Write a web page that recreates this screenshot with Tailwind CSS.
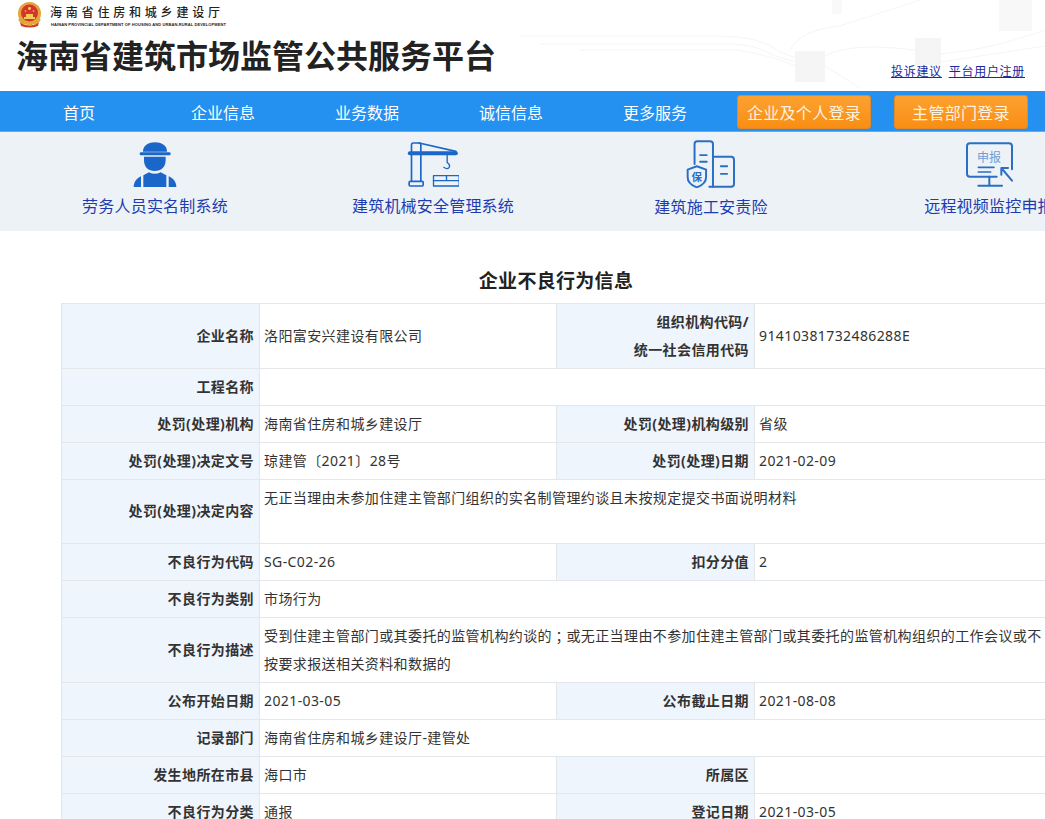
<!doctype html>
<html lang="zh-CN">
<head>
  <meta charset="UTF-8">
  <meta name="viewport" content="width=device-width, initial-scale=1.0">
  <script src="https://cdn.jsdelivr.net/npm/@tailwindcss/browser@4"></script>
</head>
<body>
<div class="w-[1045px] h-[819px] overflow-hidden bg-white font-['Noto_Sans_CJK_SC','Noto_Sans',sans-serif] text-[#333]">

  <!-- header -->
  <header class="relative h-[91px] bg-white">
    <svg class="absolute left-0 top-0" width="1045" height="91" viewBox="0 0 1045 91" fill="none">
      <g stroke="#f5f5f5" stroke-width="1">
        <path d="M520 36 H720 Q760 36 780 52 L796 58"/>
        <path d="M540 44 H730 Q755 44 775 56 L796 62"/>
        <path d="M580 50 H735 Q760 52 796 66"/>
        <path d="M825 66 L860 88"/>
        <path d="M825 56 Q850 42 915 50"/>
        <path d="M941 54 Q990 50 1045 30"/>
        <path d="M790 50 Q800 30 840 26 L920 0"/>
        <path d="M941 62 L1045 46"/>
      </g>
      <rect x="795" y="51" width="30" height="31" fill="#f5f5f5"/>
      <rect x="915" y="38" width="26" height="27" fill="#f5f5f5"/>
      <rect x="999" y="0" width="33" height="31" fill="#f8f8f8"/>
      <rect x="832" y="0" width="10" height="14" fill="#f9f9f9"/>
    </svg>

    <div class="relative flex items-start pl-[17px] pt-[2px] h-[34px]">
      <svg width="25" height="26" viewBox="0 0 25 26">
        <circle cx="12.5" cy="11.5" r="11.5" fill="#e2a63b"/>
        <circle cx="12.5" cy="11" r="8.5" fill="#d5352a"/>
        <circle cx="12.5" cy="6.5" r="1.4" fill="#f6d365"/>
        <circle cx="8.5" cy="9" r=".8" fill="#f6d365"/>
        <circle cx="16.5" cy="9" r=".8" fill="#f6d365"/>
        <path d="M7 15 H18 V17 H7Z M9 12 H16 V15 H9Z" fill="#f3c95a"/>
        <path d="M3 20 Q12.5 27 22 20 L21 24 Q12.5 27 4 24Z" fill="#c9402c"/>
        <path d="M2 17 Q4 21 8 22 M23 17 Q21 21 17 22" stroke="#e2a63b" stroke-width="2" fill="none"/>
      </svg>
      <div class="ml-[8px] flex flex-col">
        <div class="mt-px text-[12px] leading-[18px] font-medium text-[#222] tracking-[3.8px] whitespace-nowrap">海南省住房和城乡建设厅</div>
        <div class="ml-px mt-px text-[4px] leading-[5px] font-bold text-[#222] tracking-[.1px] whitespace-nowrap font-['Liberation_Sans',sans-serif]">HAINAN PROVINCIAL DEPARTMENT OF HOUSING AND URBAN-RURAL DEVELOPMENT</div>
      </div>
    </div>

    <div class="relative flex items-end justify-between pl-[16px] pr-[20px]">
      <h1 class="text-[32px] leading-[40px] font-bold text-[#222] whitespace-nowrap">海南省建筑市场监管公共服务平台</h1>
      <div class="flex gap-[7px] text-[12px] leading-[16px] tracking-[.7px] text-[#1a2a9c] underline mb-[-5px]">
        <a>投诉建议</a>
        <a>平台用户注册</a>
      </div>
    </div>
  </header>

  <!-- nav -->
  <nav class="h-[41px] bg-[#2490f0] border-b border-[#5aaef5] flex items-start pl-[7px] text-white text-[16px]">
    <a class="shrink-0 w-[144px] h-[42px] leading-[42px] text-center">首页</a>
    <a class="shrink-0 w-[144px] h-[42px] leading-[42px] text-center">企业信息</a>
    <a class="shrink-0 w-[144px] h-[42px] leading-[42px] text-center">业务数据</a>
    <a class="shrink-0 w-[144px] h-[42px] leading-[42px] text-center">诚信信息</a>
    <a class="shrink-0 w-[144px] h-[42px] leading-[42px] text-center">更多服务</a>
    <a class="shrink-0 ml-[10px] mt-[4px] w-[134px] h-[34px] leading-[32px] text-center rounded-[3px] bg-gradient-to-b from-[#fca130] to-[#f98e10] border border-[#e08a2c] tracking-[.3px] text-[#fff3df]">企业及个人登录</a>
    <a class="shrink-0 ml-[23px] mt-[4px] w-[134px] h-[34px] leading-[32px] text-center rounded-[3px] bg-gradient-to-b from-[#fca130] to-[#f98e10] border border-[#e08a2c] tracking-[.3px] text-[#fff3df]">主管部门登录</a>
  </nav>

  <!-- system links -->
  <div class="h-[99px] bg-[#edf2f6] flex pl-[16px] pt-[8px] text-[16px] text-[#1e3cb0] whitespace-nowrap">
    <a class="shrink-0 w-[278px] flex flex-col items-center">
      <svg class="h-[48px]" width="46" height="48" viewBox="217 22 138 144">
        <g fill="#1a66c9">
          <path d="M250 56 C250 20 322 20 322 56 L322 57 H250Z"/>
          <rect x="240" y="59" width="93" height="9" rx="4"/>
          <path d="M253 72 H318 V82 C318 104 304 115 285 115 C266 115 253 104 253 82Z"/>
          <path d="M222 163 C222 148 232 136 244 131 L244 163Z"/>
          <path d="M350 163 C350 148 340 136 327 131 L327 163Z"/>
          <path d="M251 128 L268 119 Q285 128 303 119 L320 128 V163 H251Z"/>
        </g>
      </svg>
      <span class="mt-[5px] leading-[24px] tracking-[.2px]">劳务人员实名制系统</span>
    </a>
    <a class="shrink-0 w-[278px] flex flex-col items-center">
      <svg class="h-[48px]" width="52" height="48" viewBox="1040 24 155 144" fill="none" stroke="#1a66c9" stroke-width="5" stroke-linecap="round" stroke-linejoin="round">
        <path d="M1053 148 V38 Q1053 33 1058 33 H1076 Q1081 33 1081 38 V148"/>
        <rect x="1046" y="148" width="42" height="14" rx="3"/>
        <path d="M1048 64 H1186" stroke-width="12"/>
        <path d="M1076 33 L1186 58"/>
        <path d="M1160 70 V92 Q1170 98 1166 106 Q1160 114 1150 106" stroke-width="4"/>
        <rect x="1119" y="131" width="77" height="31" stroke-width="4"/>
        <path d="M1119 146 H1196 M1158 131 V146" stroke-width="4"/>
      </svg>
      <span class="mt-[5px] leading-[24px] tracking-[.2px]">建筑机械安全管理系统</span>
    </a>
    <a class="shrink-0 w-[278px] flex flex-col items-center">
      <svg class="h-[48px]" width="50" height="49" viewBox="138 22 150 146" fill="none" stroke="#2a6fc4" stroke-width="6" stroke-linecap="round" stroke-linejoin="round">
        <path d="M163 95 V34 Q163 26 171 26 H210 Q219 26 219 34 V164"/>
        <path d="M219 73 H274 Q283 73 283 82 V156 Q283 164 274 164 H208"/>
        <path d="M180 68 H200 M180 88 H200 M243 102 H262 M243 125 H262"/>
        <path d="M170 102 L198 112 V135 Q198 155 170 166 Q142 155 142 135 V112Z" fill="#edf2f6"/>
        <text x="170" y="146" text-anchor="middle" font-size="32" font-weight="700" fill="#2a6fc4" stroke="none">保</text>
      </svg>
      <span class="mt-[6px] leading-[24px] tracking-[.2px]">建筑施工安责险</span>
    </a>
    <a class="shrink-0 w-[278px] flex flex-col items-center">
      <svg class="h-[48px]" width="50" height="48" viewBox="970 24 150 144" fill="none" stroke="#2a6fc4" stroke-width="6" stroke-linecap="round" stroke-linejoin="round">
        <path d="M1068 134 H988 Q979 134 979 125 V43 Q979 34 988 34 H1105 Q1114 34 1114 43 V112"/>
        <text x="1045" y="90" text-anchor="middle" font-size="36" fill="#6f9ed6" stroke="none">申报</text>
        <path d="M1013 106 H1060 M1013 120 H1050" stroke-width="5"/>
        <path d="M1114 146 L1082 108 M1082 108 V128 M1082 108 H1102" stroke-width="6"/>
        <path d="M1046 134 V160 M1013 161 H1084"/>
      </svg>
      <span class="mt-[5px] leading-[24px] tracking-[.2px]">远程视频监控申报</span>
    </a>
  </div>

  <!-- detail -->
  <main class="w-[990px] ml-[61px]">
    <h2 class="mt-[37px] h-[35px] leading-[24px] text-center text-[19px] tracking-[.3px] font-bold text-[#222]">企业不良行为信息</h2>
    <table class="w-[990px] table-fixed border-collapse text-[14px] leading-[28px] tracking-[.4px] font-['Noto_Sans','Noto_Sans_CJK_SC',sans-serif]">
      <colgroup>
        <col class="w-[198px]"><col class="w-[297px]"><col class="w-[198px]"><col>
      </colgroup>
      <tbody>
        <tr class="h-[65px]">
          <th class="border border-[#e4e7ea] bg-[#eff5fc] pr-[5px] pt-[3.5px] pb-[4.5px] text-right font-bold">企业名称</th>
          <td class="border border-[#e4e7ea] pl-[4px] pt-[3.5px] pb-[4.5px]">洛阳富安兴建设有限公司</td>
          <th class="border border-[#e4e7ea] bg-[#eff5fc] pr-[5px] pt-[3.5px] pb-[4.5px] text-right font-bold">组织机构代码/<br>统一社会信用代码</th>
          <td class="border border-[#e4e7ea] pl-[4px] pt-[3.5px] pb-[4.5px]">91410381732486288E</td>
        </tr>
        <tr class="h-[37px]">
          <th class="border border-[#e4e7ea] bg-[#eff5fc] pr-[5px] pt-[3.5px] pb-[4.5px] text-right font-bold">工程名称</th>
          <td colspan="3" class="border border-[#e4e7ea] pl-[4px] pt-[3.5px] pb-[4.5px]"></td>
        </tr>
        <tr class="h-[37px]">
          <th class="border border-[#e4e7ea] bg-[#eff5fc] pr-[5px] pt-[3.5px] pb-[4.5px] text-right font-bold">处罚(处理)机构</th>
          <td class="border border-[#e4e7ea] pl-[4px] pt-[3.5px] pb-[4.5px]">海南省住房和城乡建设厅</td>
          <th class="border border-[#e4e7ea] bg-[#eff5fc] pr-[5px] pt-[3.5px] pb-[4.5px] text-right font-bold">处罚(处理)机构级别</th>
          <td class="border border-[#e4e7ea] pl-[4px] pt-[3.5px] pb-[4.5px]">省级</td>
        </tr>
        <tr class="h-[37px]">
          <th class="border border-[#e4e7ea] bg-[#eff5fc] pr-[5px] pt-[3.5px] pb-[4.5px] text-right font-bold">处罚(处理)决定文号</th>
          <td class="border border-[#e4e7ea] pl-[4px] pt-[3.5px] pb-[4.5px]">琼建管〔2021〕28号</td>
          <th class="border border-[#e4e7ea] bg-[#eff5fc] pr-[5px] pt-[3.5px] pb-[4.5px] text-right font-bold">处罚(处理)日期</th>
          <td class="border border-[#e4e7ea] pl-[4px] pt-[3.5px] pb-[4.5px]">2021-02-09</td>
        </tr>
        <tr class="h-[64px]">
          <th class="border border-[#e4e7ea] bg-[#eff5fc] pr-[5px] pt-[3.5px] pb-[4.5px] text-right font-bold">处罚(处理)决定内容</th>
          <td colspan="3" class="border border-[#e4e7ea] pl-[4px] pt-[3.5px] pb-[4.5px] align-top">无正当理由未参加住建主管部门组织的实名制管理约谈且未按规定提交书面说明材料</td>
        </tr>
        <tr class="h-[37px]">
          <th class="border border-[#e4e7ea] bg-[#eff5fc] pr-[5px] pt-[3.5px] pb-[4.5px] text-right font-bold">不良行为代码</th>
          <td class="border border-[#e4e7ea] pl-[4px] pt-[3.5px] pb-[4.5px]">SG-C02-26</td>
          <th class="border border-[#e4e7ea] bg-[#eff5fc] pr-[5px] pt-[3.5px] pb-[4.5px] text-right font-bold">扣分分值</th>
          <td class="border border-[#e4e7ea] pl-[4px] pt-[3.5px] pb-[4.5px]">2</td>
        </tr>
        <tr class="h-[37px]">
          <th class="border border-[#e4e7ea] bg-[#eff5fc] pr-[5px] pt-[3.5px] pb-[4.5px] text-right font-bold">不良行为类别</th>
          <td colspan="3" class="border border-[#e4e7ea] pl-[4px] pt-[3.5px] pb-[4.5px]">市场行为</td>
        </tr>
        <tr class="h-[65px]">
          <th class="border border-[#e4e7ea] bg-[#eff5fc] pr-[5px] pt-[3.5px] pb-[4.5px] text-right font-bold">不良行为描述</th>
          <td colspan="3" class="border border-[#e4e7ea] pl-[4px] pt-[3.5px] pb-[4.5px]">受到住建主管部门或其委托的监管机构约谈的<span lang="zh-TW" class="align-top font-['Noto_Sans_CJK_TC',sans-serif]">；</span>或无正当理由不参加住建主管部门或其委托的监管机构组织的工作会议或不<br>按要求报送相关资料和数据的</td>
        </tr>
        <tr class="h-[37px]">
          <th class="border border-[#e4e7ea] bg-[#eff5fc] pr-[5px] pt-[3.5px] pb-[4.5px] text-right font-bold">公布开始日期</th>
          <td class="border border-[#e4e7ea] pl-[4px] pt-[3.5px] pb-[4.5px]">2021-03-05</td>
          <th class="border border-[#e4e7ea] bg-[#eff5fc] pr-[5px] pt-[3.5px] pb-[4.5px] text-right font-bold">公布截止日期</th>
          <td class="border border-[#e4e7ea] pl-[4px] pt-[3.5px] pb-[4.5px]">2021-08-08</td>
        </tr>
        <tr class="h-[37px]">
          <th class="border border-[#e4e7ea] bg-[#eff5fc] pr-[5px] pt-[3.5px] pb-[4.5px] text-right font-bold">记录部门</th>
          <td colspan="3" class="border border-[#e4e7ea] pl-[4px] pt-[3.5px] pb-[4.5px]">海南省住房和城乡建设厅-建管处</td>
        </tr>
        <tr class="h-[37px]">
          <th class="border border-[#e4e7ea] bg-[#eff5fc] pr-[5px] pt-[3.5px] pb-[4.5px] text-right font-bold">发生地所在市县</th>
          <td class="border border-[#e4e7ea] pl-[4px] pt-[3.5px] pb-[4.5px]">海口市</td>
          <th class="border border-[#e4e7ea] bg-[#eff5fc] pr-[5px] pt-[3.5px] pb-[4.5px] text-right font-bold">所属区</th>
          <td class="border border-[#e4e7ea] pl-[4px] pt-[3.5px] pb-[4.5px]"></td>
        </tr>
        <tr class="h-[37px]">
          <th class="border border-[#e4e7ea] bg-[#eff5fc] pr-[5px] pt-[3.5px] pb-[4.5px] text-right font-bold">不良行为分类</th>
          <td class="border border-[#e4e7ea] pl-[4px] pt-[3.5px] pb-[4.5px]">通报</td>
          <th class="border border-[#e4e7ea] bg-[#eff5fc] pr-[5px] pt-[3.5px] pb-[4.5px] text-right font-bold">登记日期</th>
          <td class="border border-[#e4e7ea] pl-[4px] pt-[3.5px] pb-[4.5px]">2021-03-05</td>
        </tr>
      </tbody>
    </table>
  </main>
</div>
</body>
</html>
